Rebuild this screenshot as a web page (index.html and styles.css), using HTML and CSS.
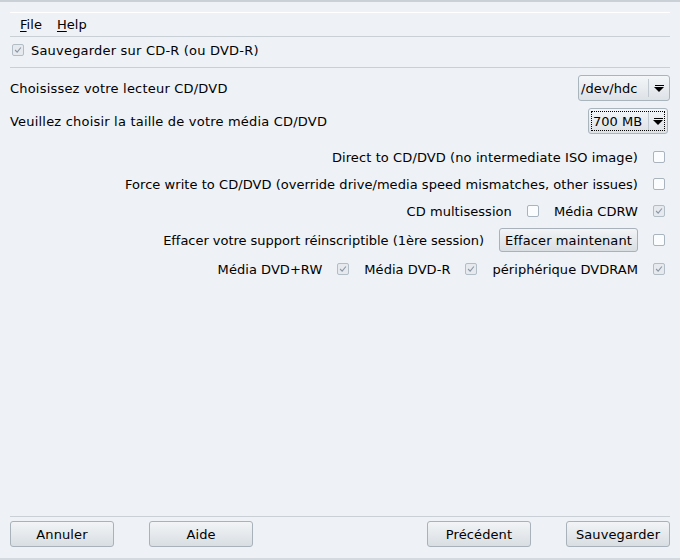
FILE: index.html
```html
<!DOCTYPE html>
<html>
<head>
<meta charset="utf-8">
<link rel="stylesheet" href="styles.css">
</head>
<body>
<div class="window">
  <div class="hl"></div>
  <div class="menu"><span><u>F</u>ile</span><span><u>H</u>elp</span></div>
  <div class="sep"></div>
  <div class="toprow">
    <span class="cb checked"><svg viewBox="0 0 12 12"><polyline points="2.5,6 5,8.5 9.5,3"/></svg></span>
    <span class="wide">Sauvegarder sur CD-R (ou DVD-R)</span>
  </div>
  <div class="sep"></div>
  <div class="form">
    <div class="row r1">
      <span class="label wide">Choisissez votre lecteur CD/DVD</span>
      <span class="combo c1"><span class="ctext">/dev/hdc</span><span class="cdiv"></span><span class="arrow"><i></i><b></b></span></span>
    </div>
    <div class="row r2">
      <span class="label wide">Veuillez choisir la taille de votre média CD/DVD</span>
      <span class="combo c2"><span class="focus"><span class="ctext">700 MB</span><span class="cdiv"></span><span class="arrow"><i></i><b></b></span></span></span>
    </div>
    <div class="row opt r3">
      <span class="mid">Direct to CD/DVD (no intermediate ISO image)</span>
      <span class="cb"></span>
    </div>
    <div class="row opt r4">
      <span>Force write to CD/DVD (override drive/media speed mismatches, other issues)</span>
      <span class="cb"></span>
    </div>
    <div class="row opt r5">
      <span>CD multisession</span>
      <span class="cb"></span>
      <span>Média CDRW</span>
      <span class="cb checked"><svg viewBox="0 0 12 12"><polyline points="2.5,6 5,8.5 9.5,3"/></svg></span>
    </div>
    <div class="row opt r6">
      <span class="tight">Effacer votre support réinscriptible (1ère session)</span>
      <button class="btn small">Effacer maintenant</button>
      <span class="cb"></span>
    </div>
    <div class="row opt r7">
      <span>Média DVD+RW</span>
      <span class="cb checked"><svg viewBox="0 0 12 12"><polyline points="2.5,6 5,8.5 9.5,3"/></svg></span>
      <span>Média DVD-R</span>
      <span class="cb checked"><svg viewBox="0 0 12 12"><polyline points="2.5,6 5,8.5 9.5,3"/></svg></span>
      <span>périphérique DVDRAM</span>
      <span class="cb checked"><svg viewBox="0 0 12 12"><polyline points="2.5,6 5,8.5 9.5,3"/></svg></span>
    </div>
  </div>
  <div class="sep"></div>
  <div class="buttons">
    <button class="btn">Annuler</button>
    <button class="btn aide">Aide</button>
    <span class="spacer"></span>
    <button class="btn">Précédent</button>
    <button class="btn sauve">Sauvegarder</button>
  </div>
</div>
</body>
</html>
```

FILE: styles.css
```css
html, body {
  margin: 0;
  padding: 0;
  background: #eef1f6;
}
body {
  font-family: "DejaVu Sans", sans-serif;
  font-size: 13px;
  letter-spacing: 0.05px;
  color: #000;
}
.wide {
  letter-spacing: 0.2px;
}
.mid {
  letter-spacing: 0.1px;
}
.tight {
  letter-spacing: -0.03px;
}
.window {
  width: 680px;
  height: 560px;
  box-sizing: border-box;
  border-top: 2px solid #c9d1d6;
  border-bottom: 2px solid #d3d9de;
  padding: 0 10px;
  display: flex;
  flex-direction: column;
}
.hl {
  height: 1px;
  background: #ffffff;
  margin-top: 10px;
}
.menu {
  height: 23px;
  display: flex;
  align-items: center;
  gap: 15px;
  padding-left: 10px;
}
.menu u {
  text-decoration: underline;
  text-underline-offset: 2px;
}
.sep {
  height: 1px;
  background: #c8d0d6;
}
.toprow {
  height: 24px;
  display: flex;
  align-items: center;
  gap: 7px;
  padding-left: 2px;
  padding-top: 1px;
  margin-bottom: 5px;
}
.cb {
  width: 12px;
  height: 12px;
  box-sizing: border-box;
  border: 1px solid #a9b4be;
  border-radius: 2px;
  background: #fbfcfd;
  display: inline-flex;
  flex: none;
}
.cb.checked {
  background: #e6eaef;
  border-color: #b3bdc6;
}
.cb svg {
  width: 10px;
  height: 10px;
}
.cb polyline {
  fill: none;
  stroke: #8c98a4;
  stroke-width: 1.4;
}
.form {
  flex: 1;
  display: flex;
  flex-direction: column;
}
.row {
  display: flex;
  align-items: center;
}
.r1 { height: 26px; margin-top: 7px; }
.r2 { height: 26px; margin-top: 7px; }
.r3 { height: 24px; margin-top: 11px; }
.r4 { height: 24px; margin-top: 3px; }
.r5 { height: 24px; margin-top: 3px; }
.r6 { height: 24px; margin-top: 5px; }
.r7 { height: 24px; margin-top: 5px; }
.label {
  flex: 1;
}
.opt {
  justify-content: flex-end;
  gap: 15px;
  padding-right: 5px;
}
.combo {
  height: 26px;
  box-sizing: border-box;
  border: 1px solid #aab4bd;
  border-radius: 3px;
  background: linear-gradient(#f4f6f8, #dde2e7);
  display: flex;
  align-items: center;
}
.c1 {
  width: 92px;
  padding: 0 4px 0 1px;
}
.c2 {
  width: 80px;
  margin-right: 2px;
  padding: 2px;
}
.focus {
  flex: 1;
  height: 100%;
  box-sizing: border-box;
  border: 1px dotted #000;
  display: flex;
  align-items: center;
}
.ctext {
  flex: 1;
  padding-left: 1px;
  letter-spacing: 0;
}
.cdiv {
  width: 1px;
  height: 18px;
  background: #c2cad1;
  margin-right: 5px;
}
.focus .cdiv {
  margin-right: 4px;
}
.arrow {
  width: 10px;
  display: flex;
  flex-direction: column;
  align-items: center;
  margin-right: 1px;
}
.arrow i {
  display: block;
  width: 9px;
  height: 1px;
  background: #000;
  margin-bottom: 1px;
}
.arrow b {
  display: block;
  width: 0;
  height: 0;
  border-left: 5px solid transparent;
  border-right: 5px solid transparent;
  border-top: 5px solid #000;
}
.btn {
  font-family: "DejaVu Sans", sans-serif;
  font-size: 13px;
  letter-spacing: 0.1px;
  color: #000;
  height: 26px;
  width: 104px;
  box-sizing: border-box;
  border: 1px solid #a9b2ba;
  border-radius: 3px;
  background: linear-gradient(#f2f4f6, #d9dee3);
  padding: 0;
}
.btn.small {
  width: 139px;
  height: 24px;
  margin-left: 0;
}
.buttons {
  height: 41px;
  display: flex;
  align-items: flex-start;
  padding-top: 4px;
  box-sizing: border-box;
}
.aide {
  margin-left: 35px;
}
.spacer {
  flex: 1;
}
.sauve {
  margin-left: 35px;
}
```
